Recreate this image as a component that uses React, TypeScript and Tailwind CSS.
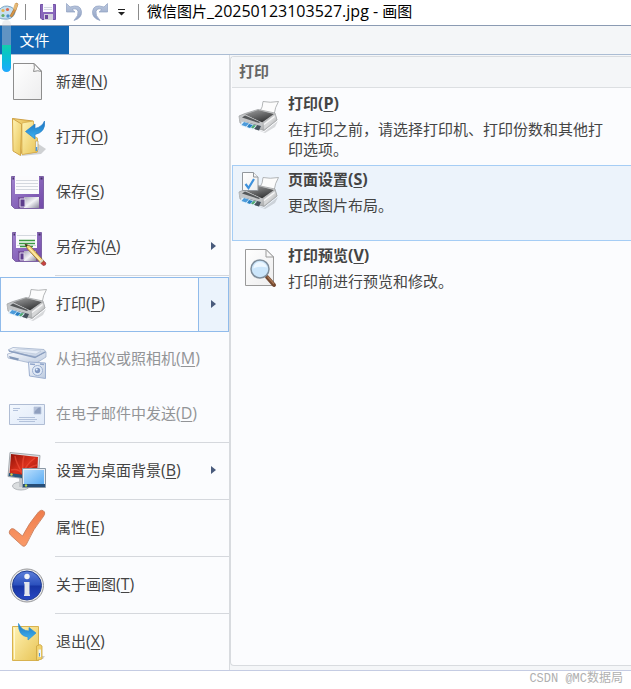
import type { ReactNode } from 'react'

interface MenuItem {
  label: string
  accessKey: string
  icon: ReactNode
  disabled?: boolean
  submenu?: boolean
  active?: boolean
  separator?: boolean
}

interface PrintOption {
  label: string
  accessKey: string
  description: string
  icon: ReactNode
  active?: boolean
}

function Icon({ children }: { children: ReactNode }) {
  return (
    <svg viewBox="0 0 40 41" className="h-[41px] w-10 shrink-0 overflow-visible" aria-hidden="true">
      {children}
    </svg>
  )
}

// Degradados compartidos por todos los iconos
function Gradients() {
  return (
    <svg className="absolute h-0 w-0" aria-hidden="true">
      <defs>
        <linearGradient id="paper" x1="0" y1="0" x2="1" y2="1">
          <stop offset="0" stopColor="#ffffff" />
          <stop offset="1" stopColor="#ededee" />
        </linearGradient>
        <linearGradient id="folder" x1="0" y1="0" x2="1" y2="1">
          <stop offset="0" stopColor="#fff3b4" />
          <stop offset="1" stopColor="#e8c456" />
        </linearGradient>
        <linearGradient id="folderDark" x1="0" y1="0" x2="1" y2="0">
          <stop offset="0" stopColor="#f7dc86" />
          <stop offset="1" stopColor="#dcae3f" />
        </linearGradient>
        <linearGradient id="arrow" x1="0" y1="0" x2="0" y2="1">
          <stop offset="0" stopColor="#1b71bf" />
          <stop offset="1" stopColor="#3fb6f2" />
        </linearGradient>
        <linearGradient id="purple" x1="0" y1="0" x2="1" y2="1">
          <stop offset="0" stopColor="#a184cf" />
          <stop offset="1" stopColor="#7149a8" />
        </linearGradient>
        <linearGradient id="shutter" x1="0" y1="0" x2="1" y2="1">
          <stop offset="0" stopColor="#a9a7b8" />
          <stop offset="0.5" stopColor="#f3f3f7" />
          <stop offset="1" stopColor="#8b899b" />
        </linearGradient>
        <linearGradient id="metal" x1="0" y1="0" x2="1" y2="1">
          <stop offset="0" stopColor="#b4b6b8" />
          <stop offset="0.5" stopColor="#d9dadb" />
          <stop offset="1" stopColor="#8f9294" />
        </linearGradient>
        <linearGradient id="dark" x1="0" y1="0" x2="0.6" y2="1">
          <stop offset="0" stopColor="#a0a1a2" />
          <stop offset="0.5" stopColor="#6a6b6c" />
          <stop offset="1" stopColor="#343536" />
        </linearGradient>
        <linearGradient id="scan" x1="0" y1="0" x2="1" y2="1">
          <stop offset="0" stopColor="#f7f9fd" />
          <stop offset="1" stopColor="#bccadf" />
        </linearGradient>
        <linearGradient id="mail" x1="0" y1="0" x2="1" y2="1">
          <stop offset="0" stopColor="#f3f8fe" />
          <stop offset="1" stopColor="#dfe9f8" />
        </linearGradient>
        <linearGradient id="red" x1="0" y1="0" x2="1" y2="1">
          <stop offset="0" stopColor="#8f1108" />
          <stop offset="0.5" stopColor="#d92f1b" />
          <stop offset="1" stopColor="#9d130a" />
        </linearGradient>
        <linearGradient id="screen" x1="0" y1="0" x2="1" y2="1">
          <stop offset="0" stopColor="#b9defd" />
          <stop offset="1" stopColor="#55a9f2" />
        </linearGradient>
        <linearGradient id="orange" x1="0" y1="0" x2="0" y2="1">
          <stop offset="0" stopColor="#ef7d4d" />
          <stop offset="1" stopColor="#fa9a68" />
        </linearGradient>
        <linearGradient id="blueDisc" x1="0" y1="0" x2="0" y2="1">
          <stop offset="0" stopColor="#5d7fda" />
          <stop offset="0.48" stopColor="#2b50bd" />
          <stop offset="0.52" stopColor="#1735a4" />
          <stop offset="1" stopColor="#2848c4" />
        </linearGradient>
        <linearGradient id="undo" x1="0" y1="0" x2="0" y2="1">
          <stop offset="0" stopColor="#bdc9df" />
          <stop offset="1" stopColor="#8fa1c4" />
        </linearGradient>
      </defs>
    </svg>
  )
}

function NewIcon() {
  return (
    <Icon>
      <path d="M6.5 1.5H27L34.5 9V37.5H6.5Z" fill="url(#paper)" stroke="#8d8d8d" />
      <path d="M27 1.5Q28 6 26.5 9.5Q31 8 34.5 9.5Z" fill="#f8f8f8" stroke="#8d8d8d" strokeLinejoin="round" />
    </Icon>
  )
}

function OpenIcon() {
  return (
    <Icon>
      <path d="M14 39L34 37L39 32L30 26Z" fill="#7d8085" opacity="0.35" />
      <path d="M5.5 1.5L26 4V20L30 22V35L15 37Z" fill="url(#folderDark)" stroke="#cfa044" />
      <path d="M15 6L26.5 4V19L30.500 21V35L15 37.500Z" fill="url(#folder)" stroke="#d4a948" strokeWidth="0.700" />
      <path d="M5.500 1.500L14.500 7V13L13.500 38.500L6 34Z" fill="url(#folder)" stroke="#d0a446" />
      <path d="M28.500 24V34L31 33V24Z" fill="#e7f4ff" stroke="#cca149" strokeWidth="0.7" />
      <path d="M29.500 30V34" stroke="#4799dd" strokeWidth="1.500" />
      <path d="M37.500 4Q39 15 28 17.500V22L18.500 14.500L28 7V11.500Q35 10 37.500 4Z" fill="url(#arrow)" stroke="#2a80c8" strokeWidth="0.7" />
    </Icon>
  )
}

function SaveIcon() {
  return (
    <Icon>
      <path d="M4.500 4.500H36.500V36.500H7.500L4.500 33.500Z" fill="url(#purple)" stroke="#7e63a5" />
      <path d="M8 4H32V22H8Z" fill="#fbfbfd" />
      <path d="M9 8.500H31M9 11.500H31M9 14.500H31M9 17.500H31" stroke="#d4d8df" />
      <path d="M5.500 6.500H7M33.500 6.500H35.500" stroke="#443364" strokeWidth="2" />
      <path d="M11 25H33V36H11Z" fill="#77519e" />
      <path d="M17 25H32V36H17Z" fill="url(#shutter)" />
      <path d="M13 27H18V35H13Z" fill="#5d3d8c" stroke="#ddd6e9" />
    </Icon>
  )
}

function SaveAsIcon() {
  return (
    <Icon>
      <path d="M5.500 5.500H34.500V34.500H8.500L5.500 31.500Z" fill="url(#purple)" stroke="#7e63a5" />
      <path d="M9 5H30V21H9Z" fill="#fbfbfd" />
      <path d="M10 8.500H29M10 18.500H29" stroke="#d4d8df" />
      <path d="M12 13.500H28M12 16.500H28M13 19.500H26" stroke="#3c9a45" strokeWidth="1.300" />
      <path d="M6.500 7.500H8M31.500 7.500H33.500" stroke="#443364" strokeWidth="2" />
      <path d="M11 24H30V34H11Z" fill="#77519e" />
      <path d="M17 24H29V34H17Z" fill="url(#shutter)" />
      <path d="M13 26H17V33H13Z" fill="#5d3d8c" stroke="#ddd6e9" />
      <path d="M18 17L23 19L37 34L34 36.500L20.500 22Z" fill="#f7d77c" stroke="#8a6a2c" strokeWidth="0.800" />
      <path d="M22 21L34 34" stroke="#fff3c4" />
      <path d="M18 17L21 18L19 20Z" fill="#302e2b" />
      <path d="M34 36.500L37 34L39 36Q39 39 36 38.500Z" fill="#c94240" stroke="#803636" strokeWidth="0.500" />
      <path d="M33 35.500L36 32.500" stroke="#d8d8d8" strokeWidth="1.500" />
    </Icon>
  )
}

function PrinterShape() {
  return (
    <g>
      <path d="M3 28L25 36L39 25L36 31L26 37Z" fill="#6d7072" opacity="0.250" />
      <path d="M24 5.500Q31 7 39.500 5.500Q36 11 35 19L20.500 16Q24 11 24 5.500Z" fill="#fcfcfc" stroke="#a2a4a6" strokeWidth="0.800" />
      <path d="M0 20L6 17.500L19 13.500L36 17L38 24L25 34.500L1 27Z" fill="url(#metal)" stroke="#96999b" strokeWidth="0.700" />
      <path d="M6 18.500L19 14L35 18L23 26.500Z" fill="url(#dark)" />
      <path d="M0.500 20.500L6 18.500L23 26.500V30L0.500 24Z" fill="#c3c5c7" />
      <path d="M3 21.500L6 19.500L21 26L20 27Z" fill="#55585a" />
      <path d="M24 27L36 18L38 24L25 34Z" fill="url(#metal)" stroke="#a4a6a8" strokeWidth="0.500" />
      <path d="M25 28.500L35.500 20.500" stroke="#f7f7f7" strokeWidth="1.300" />
      <path d="M3 25L22 30L20 34.500L3 29Z" fill="#46525d" />
      <path d="M3.500 25L18 29.500L14 34L1 29.500Z" fill="#e3f1fb" />
      <path d="M5 26L10 27.500L7 30.500L2.500 29Z" fill="#4c9bdb" />
      <path d="M10 28L14 29L11 32L8 31Z" fill="#287fc3" />
      <path d="M14.500 29L17 29.500L14 32.500L12 31.500Z" fill="#4ba870" />
    </g>
  )
}

function PrintIcon() {
  return (
    <Icon>
      <PrinterShape />
    </Icon>
  )
}

function ScannerIcon() {
  return (
    <Icon>
      <path d="M1 11L6 8.500L37 10.500L39 13L31 18L6 14Z" fill="url(#scan)" stroke="#a1b1cb" strokeWidth="0.800" />
      <path d="M6 12L11 10L34 12L29 15Z" fill="#e6edf7" stroke="#b5c2d6" strokeWidth="0.600" />
      <path d="M0.500 15L8 13L28 18L39 13V18L28 25L1 19Z" fill="url(#scan)" stroke="#a3b3cc" strokeWidth="0.800" />
      <path d="M2 12L28 18.500L38 13" fill="none" stroke="#8b9fc0" strokeWidth="1.300" />
      <path d="M2 17L12 19.500L11 21.500L3 19.500Z" fill="#8297b8" />
      <path d="M21.500 23L38.500 24V39.500L22.500 37Z" fill="url(#scan)" stroke="#9cafd0" />
      <path d="M23 25L28 25.500M33 25L37 25.500" stroke="#90a5ca" strokeWidth="1.500" />
      <circle cx="30.500" cy="31.500" r="5" fill="#e2ebf8" stroke="#9aaed0" />
      <circle cx="30.500" cy="31.500" r="2.700" fill="#7f96c0" />
      <circle cx="29.700" cy="30.500" r="1" fill="#e8f3ff" />
    </Icon>
  )
}

function MailIcon() {
  return (
    <Icon>
      <path d="M2.500 10.500H37.500V30.500H2.500Z" fill="url(#mail)" stroke="#b0bdd4" />
      <path d="M6 14.500H13M6 16.500H11M12 23.500H28M10 25.500H30M12 27.500H28" stroke="#b3c2db" />
      <path d="M27 13H34V20H27Z" fill="#8f9fbe" stroke="#bac8de" strokeWidth="0.800" />
      <path d="M27 18L32 13H27Z" fill="#b3c0d8" />
    </Icon>
  )
}

function DesktopIcon() {
  return (
    <Icon>
      <ellipse cx="14" cy="35" rx="8.500" ry="4" fill="#dadddf" stroke="#b4b8bc" />
      <path d="M12 27H19V36H12Z" fill="#c3c7cb" />
      <path d="M3 1.500L33 4.500L31 29.500L1 25.500Z" fill="#dfe1e4" stroke="#a4a9ae" />
      <path d="M4 3L31 6L30 26L2.500 23Z" fill="url(#red)" />
      <path d="M16 23Q11 17 4 19M16 23Q9 12 8 5M16 23Q15 12 17 5M16 23Q19 13 28 7M16 23Q23 15 30 14" fill="none" stroke="#f4543d" strokeWidth="1.500" opacity="0.600" />
      <path d="M2 22L18 24V27.500L1.500 25Z" fill="#29577c" />
      <circle cx="4.500" cy="23.500" r="1.200" fill="#e0cc45" />
      <path d="M15.500 17.500H38.500V36.500H15.500Z" fill="#e6edf4" stroke="#8b98a5" />
      <path d="M17 19H37V34H17Z" fill="url(#screen)" />
      <path d="M16 33H38V36H16Z" fill="#264e78" />
      <circle cx="19" cy="34.500" r="1.200" fill="#b6db49" />
    </Icon>
  )
}

function CheckIcon() {
  return (
    <Icon>
      <path
        d="M2.500 23Q4 19.500 7 21L15.500 28Q22 15 31.500 4Q35 0.500 37.500 4Q38.500 6 36 9Q26 21 19.500 36Q17.500 40 14.500 37L3.500 27Q1.500 25 2.500 23Z"
        fill="url(#orange)"
        stroke="#c9805f"
        strokeWidth="0.900"
      />
    </Icon>
  )
}

function AboutIcon() {
  return (
    <Icon>
      <circle cx="20" cy="20.500" r="16.500" fill="#e9e9ea" stroke="#96979a" />
      <circle cx="20" cy="20.500" r="14.500" fill="url(#blueDisc)" stroke="#233f93" />
      <circle cx="20" cy="11.500" r="2.700" fill="#f3f4f7" />
      <path d="M17 17H22.500V29.500H23V31H17V29.500H17.500V18.500H17Z" fill="#e3e6ec" />
    </Icon>
  )
}

function ExitIcon() {
  return (
    <Icon>
      <path d="M30 34H38L36 37H30Z" fill="#777b82" opacity="0.350" />
      <path d="M5.500 4.500H31.500V38.500H5.500Z" fill="url(#folder)" stroke="#d8b24f" />
      <path d="M7.500 6V37" stroke="#fff8d2" />
      <path d="M29.500 24L33 22.500L35 24V37L29.500 38.500Z" fill="#f1d26c" stroke="#cca33f" strokeWidth="0.800" />
      <path d="M31.500 27.500H34V35H31.500Z" fill="#eaf3fb" />
      <path d="M32.500 31V34.500" stroke="#559bd6" />
      <path d="M11.500 1.500Q11 14 21 15V18L29 11L22 5.500V9Q15 9 11.500 1.500Z" fill="url(#arrow)" stroke="#2b91d7" strokeWidth="0.700" />
    </Icon>
  )
}

function PageSetupIcon() {
  return (
    <Icon>
      <PrinterShape />
      <path d="M3.500 0.500H14.500L19 5V18.500H3.500Z" fill="url(#paper)" stroke="#92979c" />
      <path d="M14.500 0.500V5H19" fill="#f4f4f4" stroke="#92979c" />
      <path d="M6.500 12L9.500 16L15 7" fill="none" stroke="#3e91dc" strokeWidth="2.200" />
    </Icon>
  )
}

function PreviewIcon() {
  return (
    <Icon>
      <path d="M6.500 1.500H27L34.500 9V37.500H6.500Z" fill="url(#paper)" stroke="#9a9a9a" />
      <path d="M27 1.500V9H34.500Z" fill="#f8f8f8" stroke="#9a9a9a" strokeLinejoin="round" />
      <path d="M28 29L35 37" stroke="#74482f" strokeWidth="4" strokeLinecap="round" />
      <path d="M28.500 28.500L35 36" stroke="#aa7856" strokeWidth="1.200" />
      <circle cx="21" cy="21" r="9" fill="#cce6fb" stroke="#7f8e9c" strokeWidth="1.500" />
      <path d="M14 20.500Q15 14.500 21 14Q27 14.500 28 19.500Q21 17.500 14 20.500Z" fill="#edf7ff" />
    </Icon>
  )
}

const menuItems: MenuItem[] = [
  { label: '新建', accessKey: 'N', icon: <NewIcon /> },
  { label: '打开', accessKey: 'O', icon: <OpenIcon /> },
  { label: '保存', accessKey: 'S', icon: <SaveIcon /> },
  { label: '另存为', accessKey: 'A', icon: <SaveAsIcon />, submenu: true, separator: true },
  { label: '打印', accessKey: 'P', icon: <PrintIcon />, submenu: true, active: true },
  { label: '从扫描仪或照相机', accessKey: 'M', icon: <ScannerIcon />, disabled: true },
  { label: '在电子邮件中发送', accessKey: 'D', icon: <MailIcon />, disabled: true, separator: true },
  { label: '设置为桌面背景', accessKey: 'B', icon: <DesktopIcon />, submenu: true, separator: true },
  { label: '属性', accessKey: 'E', icon: <CheckIcon />, separator: true },
  { label: '关于画图', accessKey: 'T', icon: <AboutIcon />, separator: true },
  { label: '退出', accessKey: 'X', icon: <ExitIcon /> }
]

const printOptions: PrintOption[] = [
  {
    label: '打印',
    accessKey: 'P',
    description: '在打印之前，请选择打印机、打印份数和其他打印选项。',
    icon: <PrintIcon />
  },
  {
    label: '页面设置',
    accessKey: 'S',
    description: '更改图片布局。',
    icon: <PageSetupIcon />,
    active: true
  },
  {
    label: '打印预览',
    accessKey: 'V',
    description: '打印前进行预览和修改。',
    icon: <PreviewIcon />
  }
]

function Label({ text, accessKey }: { text: string; accessKey: string }) {
  return (
    <>
      {text}
      <span className="text-base leading-5">
        (<u className="underline decoration-1 underline-offset-2">{accessKey}</u>)
      </span>
    </>
  )
}

function SubmenuArrow() {
  return (
    <svg viewBox="0 0 5 8" className="h-2 w-[5px]" aria-hidden="true">
      <path d="M0 0L5 4L0 8Z" fill="#495b7c" />
    </svg>
  )
}

function TitleBar() {
  return (
    <header className="flex h-[26px] items-center border-b border-[#8b9bb3] bg-white pb-[2px]">
      <svg viewBox="0 0 20 20" className="h-5 w-5" aria-hidden="true">
        <path d="M-1 8Q4 2 11 5Q17 8 14 13Q11 18 4 17Q-1 17 -1 14Z" fill="#c6dff0" stroke="#78a4c3" />
        <circle cx="3" cy="8.500" r="1.600" fill="#e7b34c" />
        <circle cx="7.500" cy="7.500" r="1.600" fill="#dd6850" />
        <circle cx="3" cy="13.500" r="1.600" fill="#65ad68" />
        <circle cx="8" cy="14" r="1.700" fill="#4c91cb" />
        <path d="M10 14L14 7L16 1L18 2L16 8L12 15Z" fill="#d89647" stroke="#a8702f" strokeWidth="0.700" />
        <path d="M13 7L15 1L18 2L16 8Z" fill="#e5b977" />
      </svg>
      <span className="ml-[5px] h-4 w-px bg-[#8b8b8b]" />
      <button type="button" aria-label="保存" className="ml-[14px]">
        <svg viewBox="0 0 16 16" className="h-4 w-4" aria-hidden="true">
          <path d="M0.500 0.500H15.500V15.500H2L0.500 14Z" fill="#8867bb" stroke="#7453a7" />
          <path d="M3 0H13V8H3Z" fill="#fafafe" />
          <path d="M4 3.500H12M4 5.500H12" stroke="#d3d8e1" />
          <path d="M4 10H13V16H4Z" fill="#d2d0dc" />
          <path d="M5 11H8V15H5Z" fill="#6b489c" />
        </svg>
      </button>
      <button type="button" aria-label="撤消" className="ml-[10px]">
        <svg viewBox="0 0 16 18" className="h-[18px] w-4" aria-hidden="true">
          <path d="M0.500 0.500V9H9L6 6.500Q11 4.500 12 8.500Q13 12 8 17.500Q16 15 15.500 8.500Q14.500 0.500 4 4Z" fill="url(#undo)" stroke="#8fa0c2" strokeWidth="0.700" />
        </svg>
      </button>
      <button type="button" aria-label="恢复" className="ml-[10px]">
        <svg viewBox="0 0 16 18" className="h-[18px] w-4" aria-hidden="true">
          <path d="M15.500 0.500V9H7L10 6.500Q5 4.500 4 8.500Q3 12 8 17.500Q0 15 0.500 8.500Q1.500 0.500 12 4Z" fill="url(#undo)" stroke="#8fa0c2" strokeWidth="0.700" />
        </svg>
      </button>
      <button type="button" aria-label="自定义快速访问工具栏" className="ml-[10px] pt-0.5">
        <svg viewBox="0 0 7 7" className="h-[7px] w-[7px]" aria-hidden="true">
          <path d="M0 0H7V1H0ZM0 3H7L3.500 6.500Z" fill="#222222" />
        </svg>
      </button>
      <span className="ml-[13px] h-4 w-px bg-[#8b8b8b]" />
      <h1 className="ml-2 whitespace-nowrap pb-0.5 leading-5 text-black">
        微信图片<span className="text-base leading-5">_20250123103527.jpg - </span>画图
      </h1>
    </header>
  )
}

function MenuRow({ item }: { item: MenuItem }) {
  const color = item.disabled ? 'text-[#929497]' : 'text-[#444444]'

  return (
    <li>
      {item.active ? (
        <div className="flex h-[55px] border border-[#90bbeb] bg-[#fbfcfe]">
          <button type="button" className="flex grow items-center gap-[9px] pl-1.5 text-left text-[#444444]">
            {item.icon}
            <span className="pb-1">
              <Label text={item.label} accessKey={item.accessKey} />
            </span>
          </button>
          <button type="button" aria-label="打印选项" className="flex w-[30px] items-center justify-center border-l border-[#90bbeb] bg-[#ebf3fc] pb-0.5">
            <SubmenuArrow />
          </button>
        </div>
      ) : (
        <button
          type="button"
          disabled={item.disabled}
          className={`flex h-[55px] w-full items-center gap-[9px] pl-[7px] pr-[13px] text-left ${color}`}
        >
          {item.icon}
          <span className="flex grow items-center justify-between whitespace-nowrap pb-1">
            <span>
              <Label text={item.label} accessKey={item.accessKey} />
            </span>
            {item.submenu && <SubmenuArrow />}
          </span>
        </button>
      )}
      {item.separator && <hr className="mb-px ml-[55px] border-t border-[#d5d8dd]" />}
    </li>
  )
}

function PrintRow({ option }: { option: PrintOption }) {
  return (
    <li>
      <button
        type="button"
        className={`flex h-[76px] w-full items-start gap-[9px] border border-r-0 pl-1.5 pr-4 pt-[3px] text-left text-[#444444] ${
          option.active ? 'border-[#a5cdf5] bg-[#ecf3fb]' : 'border-transparent'
        }`}
      >
        <span className="pt-[3px]">{option.icon}</span>
        <span className="block grow">
          <span className="block font-bold leading-5">
            <Label text={option.label} accessKey={option.accessKey} />
          </span>
          <span className="mt-1.5 block leading-5">{option.description}</span>
        </span>
      </button>
    </li>
  )
}

export default function App() {
  return (
    <div className="relative flex min-h-screen flex-col overflow-hidden bg-white font-['Open_Sans','Noto_Sans_CJK_SC',sans-serif] text-[15px] leading-5">
      <Gradients />
      <TitleBar />

      {/* Pestañas de la cinta */}
      <div className="flex h-[29px] border-b border-[#abbdd4] bg-[#f4f6f8]">
        <button type="button" className="w-[69px] bg-[#1367b3] text-white">
          文件
        </button>
      </div>

      {/* Menú de archivo */}
      <main className="flex border-b border-[#c5cce3] bg-[#fbfcfe]">
        <nav className="w-[229px] shrink-0">
          <ul>
            {menuItems.map((item) => (
              <MenuRow key={item.label} item={item} />
            ))}
          </ul>
        </nav>
        <div className="flex grow flex-col border-l border-[#d8dbdf] bg-[#f4f6f8] pb-1 pt-px">
          <section className="grow rounded-l-sm border-y border-l border-[#d8dbdf] bg-[#fbfcfe] pl-px">
            <h2 className="h-[31px] border-b border-[#dcdfe2] bg-[#f4f6f8] pl-[7px] font-bold leading-[28px] text-[#666666]">
              打印
            </h2>
            <ul className="pt-px">
              {printOptions.map((option) => (
                <PrintRow key={option.label} option={option} />
              ))}
            </ul>
          </section>
        </div>
      </main>

      <footer className="flex justify-end pr-2 font-['Liberation_Mono','Noto_Sans_CJK_SC',monospace] text-xs leading-4 text-[#b0b0b0]">
        CSDN @MC数据局
      </footer>

      {/* Indicador flotante */}
      <div className="absolute left-[2px] top-5 flex h-[52px] w-[9px] flex-col overflow-hidden rounded-full bg-[#d4d8dc]/40">
        <span className="mt-auto h-[27px] bg-linear-to-b from-[#13cfab] to-[#1fa8ff]" />
      </div>
    </div>
  )
}
